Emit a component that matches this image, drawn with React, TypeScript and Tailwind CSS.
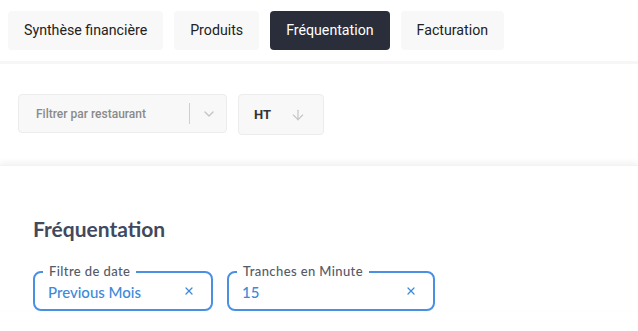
import { ChevronDown, ArrowDown, X } from "lucide-react";

const tabs = ["Synthèse financière", "Produits", "Fréquentation", "Facturation"];

const Field = ({ label, value, width }: { label: string; value: string; width: string }) => (
  <div className={`relative h-[40px] ${width} rounded-[8px] border-2 border-[#4a90e2] flex items-center pl-[13px] pr-[16px]`}>
    <span className="absolute -top-[10px] left-[8px] bg-white px-[6px] text-[13px] leading-[16px] tracking-[0.4px] text-[#555a66] font-medium">
      {label}
    </span>
    <span className="flex-1 text-[15px] text-[#3d8ad9] font-medium pt-[2px]">{value}</span>
    <X className="w-[12px] h-[12px] text-[#3d8ad9]" strokeWidth={2.5} />
  </div>
);

export default function App() {
  return (
    <div className="w-[638px] h-[331px] bg-white overflow-hidden" style={{ fontFamily: "Roboto, sans-serif" }}>
      {/* Tabs */}
      <div className="flex gap-[11px] pl-[8px] pt-[11px] pb-[11px]">
        {tabs.map((t) => (
          <div
            key={t}
            className={`h-[39px] px-[16px] flex items-center rounded-[4px] text-[14.2px] pt-[1px] ${
              t === "Fréquentation" ? "bg-[#2a2e3b] text-white" : "bg-[#f8f8f8] text-[#222]"
            }`}
          >
            {t}
          </div>
        ))}
      </div>
      <div className="h-[3px] bg-[#f6f6f6]" />

      {/* Filters */}
      <div className="flex items-start gap-[11px] pl-[18px] pt-[30px] h-[101px]">
        <div className="w-[209px] h-[39px] bg-[#f8f8f8] border border-[#ececec] rounded-[4px] flex items-center pl-[17px]">
          <span className="flex-1 text-[12px] font-medium text-[#8a8a8a]">Filtrer par restaurant</span>
          <div className="w-px h-[21px] bg-[#cfcfcf]" />
          <ChevronDown className="w-[16px] h-[16px] text-[#c4c4c4] ml-[11px] mr-[9px]" strokeWidth={2} />
        </div>
        <div className="w-[86px] h-[41px] bg-[#f8f8f8] border border-[#ececec] rounded-[4px] flex items-center pl-[15px]">
          <span className="flex-1 text-[13px] font-bold text-[#333]">HT</span>
          <ArrowDown className="w-[16px] h-[16px] text-[#c4c4c4] mr-[17px]" strokeWidth={1.75} />
        </div>
      </div>

      {/* Card */}
      <div className="bg-white shadow-[0_-3px_6px_rgba(0,0,0,0.05)] border-t border-[#f3f3f3] pl-[33px] pt-[49px]" style={{ fontFamily: "Lato, sans-serif" }}>
        <h2 className="text-[21px] font-bold text-[#3f4a5f] leading-[28px]">Fréquentation</h2>
        <div className="flex gap-[14px] mt-[28px]">
          <Field label="Filtre de date" value="Previous Mois" width="w-[180px]" />
          <Field label="Tranches en Minute" value="15" width="w-[208px]" />
        </div>
      </div>
    </div>
  );
}
